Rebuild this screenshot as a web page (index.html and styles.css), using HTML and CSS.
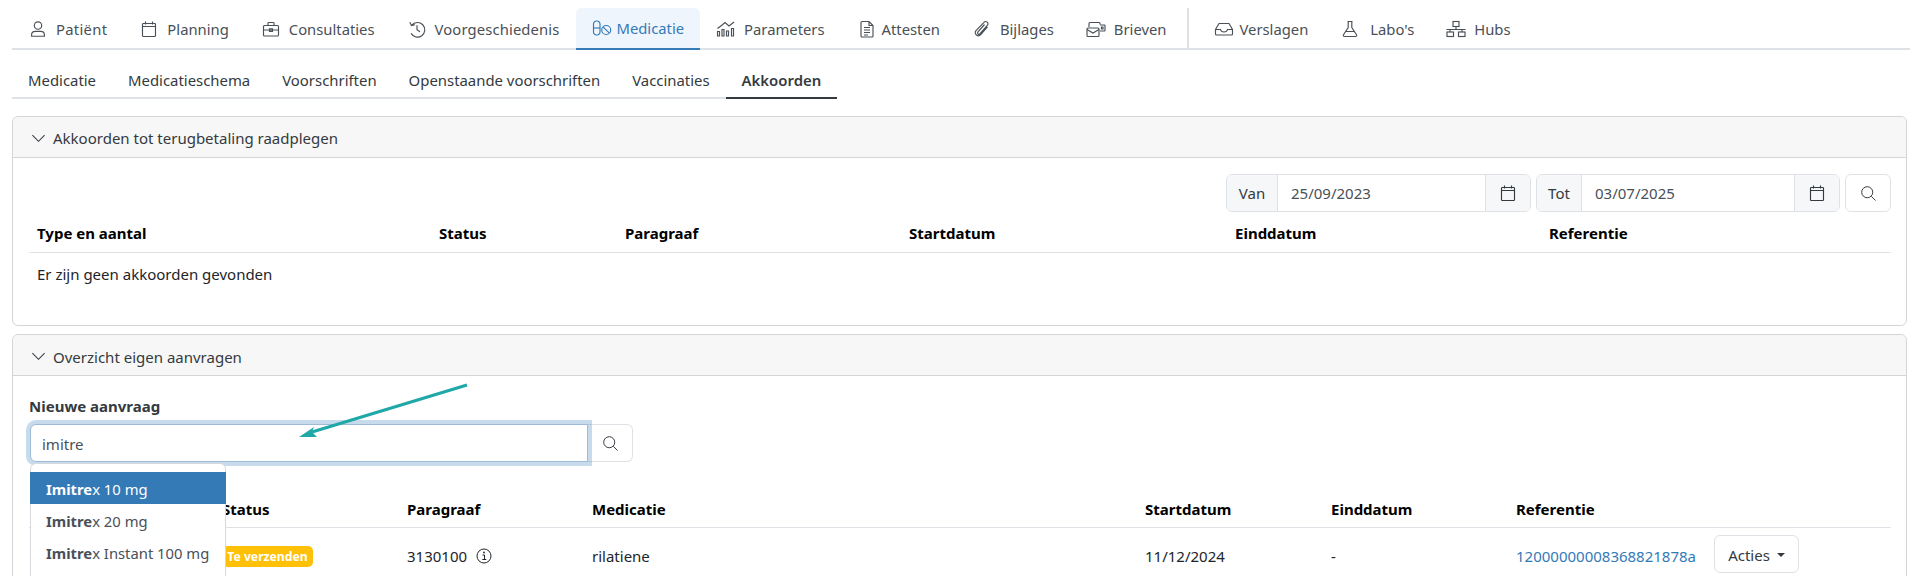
FILE: index.html
```html
<!DOCTYPE html>
<html lang="nl">
<head>
<meta charset="utf-8">
<title>Akkoorden</title>
<link rel="stylesheet" href="styles.css">
</head>
<body>
<nav class="main-nav">
  <a class="tab tab-patient"><svg class="ic" viewBox="0 0 20 20"><circle cx="10" cy="6.500" r="3.700"/><path d="M3.600 17.200v-1.400c0-2.200 1.800-3.400 3.800-3.400h5.200c2 0 3.800 1.200 3.800 3.400v1.400z"/></svg>Patiënt</a>
  <a class="tab"><svg class="ic" viewBox="0 0 20 20"><rect x="3.500" y="4.500" width="13" height="13" rx=".8"/><path d="M3.500 7.500h13M6.500 2.500v3M13.500 2.500v3"/></svg>Planning</a>
  <a class="tab"><svg class="ic" viewBox="0 0 20 20"><rect x="2.500" y="6.500" width="15" height="10.500" rx="1"/><path d="M7 6.500V4.300c0-.5.3-.8.8-.8h4.400c.5 0 .8.300.8.800v2.200M2.500 11h15M8.500 9.700h3v2.600h-3z"/></svg>Consultaties</a>
  <a class="tab tab-history"><svg class="ic" viewBox="0 0 20 20"><path d="M4.800 6.200A7.300 7.300 0 1 1 4.100 14.400M2.800 3.200l1.700 3.300 3.400-.8M10 6.300v4.400l3 2"/></svg>Voorgeschiedenis</a>
  <a class="tab tab-active tab-tight"><svg class="ic" viewBox="0 0 20 20"><rect x="1.500" y="3" width="6.500" height="14" rx="3.250"/><path d="M1.500 10H8"/><circle cx="14.200" cy="12" r="4.500"/><path d="M11 8.800l6.400 6.400"/></svg>Medicatie</a>
  <a class="tab"><svg class="ic" viewBox="0 0 20 20"><path d="M1.500 9.500l4-3 3.500-3 4 3.500 5-4"/><path d="M1.500 12.500h2v4.500h-2zM6 10.500h2V17H6zM10.500 12h2v5h-2zM15.500 9.500h2V17h-2z"/></svg>Parameters</a>
  <a class="tab tab-tight"><svg class="ic" viewBox="0 0 20 20"><path d="M4 3.500c0-.6.4-1 1-1h7l4 4v10.500c0 .6-.4 1-1 1H5c-.6 0-1-.4-1-1zM12 2.500v4h4M7 8.500h6M7 11h6M7 13.500h6M7 16h4"/></svg>Attesten</a>
  <a class="tab"><svg class="ic" viewBox="0 0 20 20"><path d="M12.500 5.500l-6.700 7.700c-1 1.200 1 2.900 2 1.800l7.700-8.800c1.800-2.100-1.600-5-3.500-2.900L4 11.700c-2.600 3 2.100 7 4.700 4l6.800-7.800"/></svg>Bijlages</a>
  <a class="tab"><svg class="ic" viewBox="0 0 20 20"><path d="M3 8V4.500c0-.6.4-1 1-1h9c.6 0 1 .4 1 1v1"/><rect x="1" y="9" width="12" height="8.500" rx="1"/><path d="M1 10.500l6 3.500 6-3.500M14 6h4.500c.3 0 .5.200.5.500v5c0 .3-.2.500-.5.500H14"/><path d="M15.500 8h1.500v2h-1.500z"/></svg>Brieven</a>
  <span class="nav-sep"></span>
  <a class="tab tab-tight"><svg class="ic" viewBox="0 0 20 20"><path d="M1.500 10.500l3.500-6h10l3.500 6v4.500c0 .6-.4 1-1 1h-15c-.6 0-1-.4-1-1z"/><path d="M1.500 10.500h5c.3 1.500 1.700 2.500 3.500 2.500s3.200-1 3.500-2.500h5"/></svg>Verslagen</a>
  <a class="tab tab-wide"><svg class="ic" viewBox="0 0 20 20"><path d="M7.500 2.500h5M8.200 2.500v6L3.500 15.800c-.6 1 .1 1.700 1 1.700h11c.9 0 1.600-.7 1-1.700L11.800 8.500v-6M5.800 12.500h8.400"/></svg>Labo's</a>
  <a class="tab"><svg class="ic" viewBox="0 0 20 20"><rect x="7" y="2.500" width="6" height="5"/><rect x="1" y="13" width="6.500" height="4.500"/><rect x="12.500" y="13" width="6.500" height="4.500"/><path d="M10 7.500v3M.5 10.500h19M4 10.500V13M16 10.500V13"/></svg>Hubs</a>
</nav>

<nav class="sub-nav">
  <a class="sub-tab">Medicatie</a>
  <a class="sub-tab">Medicatieschema</a>
  <a class="sub-tab">Voorschriften</a>
  <a class="sub-tab">Openstaande voorschriften</a>
  <a class="sub-tab">Vaccinaties</a>
  <a class="sub-tab sub-active">Akkoorden</a>
</nav>

<section class="card">
  <header class="card-head"><svg class="chev" viewBox="0 0 16 16"><path d="M1.500 4.500L8 11l6.500-6.500"/></svg>Akkoorden tot terugbetaling raadplegen</header>
  <div class="card-body">
    <div class="filters">
      <div class="group group-van">
        <span class="addon addon-van">Van</span>
        <span class="field">25/09/2023</span>
        <span class="addon addon-cal"><svg class="ic cal" viewBox="0 0 20 20"><rect x="3.500" y="4.500" width="13" height="13" rx=".8"/><path d="M3.500 7.500h13M6.500 2.500v3M13.500 2.500v3"/></svg></span>
      </div>
      <div class="group group-tot">
        <span class="addon addon-tot">Tot</span>
        <span class="field">03/07/2025</span>
        <span class="addon addon-cal"><svg class="ic cal" viewBox="0 0 20 20"><rect x="3.500" y="4.500" width="13" height="13" rx=".8"/><path d="M3.500 7.500h13M6.500 2.500v3M13.500 2.500v3"/></svg></span>
      </div>
      <button class="btn-search"><svg class="ic mag" viewBox="0 0 20 20"><circle cx="8.500" cy="8.500" r="6.500"/><path d="M13.300 13.300l5 5"/></svg></button>
    </div>
    <div class="grid grid-one grid-head">
      <span>Type en aantal</span><span>Status</span><span>Paragraaf</span><span>Startdatum</span><span>Einddatum</span><span>Referentie</span>
    </div>
    <div class="empty">Er zijn geen akkoorden gevonden</div>
  </div>
</section>

<section class="card card-two">
  <header class="card-head card-head-two"><svg class="chev" viewBox="0 0 16 16"><path d="M1.500 4.500L8 11l6.500-6.500"/></svg>Overzicht eigen aanvragen</header>
  <div class="card-body body-two">
    <label class="new-label">Nieuwe aanvraag</label>
    <div class="search">
      <div class="search-input">imitre</div>
      <button class="btn-search btn-join"><svg class="ic mag" viewBox="0 0 20 20"><circle cx="8.500" cy="8.500" r="6.500"/><path d="M13.300 13.300l5 5"/></svg></button>
      <ul class="dropdown">
        <li class="opt opt-active"><b>Imitre</b>x 10 mg</li>
        <li class="opt"><b>Imitre</b>x 20 mg</li>
        <li class="opt"><b>Imitre</b>x Instant 100 mg</li>
      </ul>
    </div>
    <div class="grid grid-two grid-head grid-head-two">
      <span></span><span>Status</span><span>Paragraaf</span><span>Medicatie</span><span>Startdatum</span><span>Einddatum</span><span>Referentie</span>
    </div>
    <div class="grid grid-two grid-row">
      <span></span>
      <span><span class="badge">Te verzenden</span></span>
      <span class="para">3130100 <svg class="info" viewBox="0 0 16 16"><circle cx="8" cy="8" r="7"/><path d="M6.500 7h2v4.500M6.300 11.500h4"/><circle class="dot" cx="8" cy="4.500" r=".9"/></svg></span>
      <span>rilatiene</span>
      <span>11/12/2024</span>
      <span>-</span>
      <span class="ref"><a class="link">12000000008368821878a</a><button class="btn-acties">Acties<i class="caret"></i></button></span>
    </div>
  </div>
</section>

<svg class="arrow" viewBox="0 0 180 60"><path d="M168 3L13 50"/><path class="head" d="M0 55l15-10-2 5 5 5z"/></svg>
</body>
</html>
```
FILE: styles.css
```css
* { box-sizing: border-box; }
html, body { height: 576px; overflow: hidden; }
body {
  margin: 0;
  padding: 0 4px 0 12px;
  position: relative;
  background: #fff;
  color: #212529;
  font: 15px/20px "Noto Sans", "Open Sans", sans-serif;
}
svg { display: block; flex: none; }
.ic { width: 20px; height: 20px; fill: none; stroke: #495057; stroke-width: 1.15; }

.main-nav {
  display: flex;
  height: 50px;
  margin-right: -3px;
  padding-top: 8px;
  border-bottom: 2px solid #dee2e6;
  font-size: 14.8px;
}
.tab {
  display: flex;
  align-items: center;
  gap: 8px;
  height: 42px;
  padding: 0 16px;
  color: #495057;
}
.tab-patient { letter-spacing: .3px; }
.tab-history { letter-spacing: .13px; }
.tab-tight { gap: 5px; }
.tab-wide { gap: 10px; }
.tab-active {
  background: #eff5fc;
  color: #337ab7;
  border-bottom: 2px solid #337ab7;
  border-radius: 6px 6px 0 0;
}
.tab-active .ic { stroke: #337ab7; }
.nav-sep { width: 2px; height: 40px; margin: 0 9px 0 5px; background: #dee2e6; }

.sub-nav { display: inline-flex; height: 49px; vertical-align: top; font-size: 14.9px; }
.sub-tab {
  display: flex;
  align-items: center;
  height: 49px;
  padding: 12px 16px 0;
  border-bottom: 2px solid #dee2e6;
  color: #343a40;
}
.sub-active { font-weight: 600; border-bottom-color: #343a40; }

.card {
  height: 210px;
  margin-top: 17px;
  border: 1px solid #d5d5d5;
  border-radius: 6px;
  overflow: hidden;
}
.card-two { height: 300px; margin-top: 8px; overflow: visible; }
.card-head {
  display: flex;
  align-items: center;
  gap: 7px;
  height: 41px;
  padding: 2px 18px 0;
  background: #f7f7f7;
  border-bottom: 1px solid #d5d5d5;
  border-radius: 6px 6px 0 0;
  color: #343a40;
}
.card-head-two { padding-top: 3px; }
.chev { width: 15px; height: 15px; fill: none; stroke: #343a40; stroke-width: 1.1; }
.card-body { padding: 16px 15px 16px 16px; }

.filters { display: flex; justify-content: flex-end; gap: 5px; }
.group { display: flex; height: 38px; border: 1px solid #dee2e6; border-radius: 6px; overflow: hidden; }
.group-van { width: 305px; }
.group-tot { width: 304px; }
.addon {
  display: flex;
  flex: none;
  align-items: center;
  justify-content: center;
  background: #f6f7f9;
  color: #343a40;
}
.addon-van { width: 51px; border-right: 1px solid #dee2e6; }
.addon-tot { width: 45px; border-right: 1px solid #dee2e6; }
.addon-cal { width: 45px; border-left: 1px solid #dee2e6; }
.field { flex: 1; display: flex; align-items: center; padding-left: 13px; color: #495057; }
.cal { stroke: #343a40; }
.btn-search {
  display: flex;
  align-items: center;
  justify-content: center;
  width: 46px;
  height: 38px;
  padding: 0;
  background: #fff;
  border: 1px solid #dee2e6;
  border-radius: 6px;
}
.mag { width: 17px; height: 17px; stroke: #343a40; }

.grid { display: grid; align-items: center; }
.grid > span { padding-left: 8px; }
.grid-one { grid-template-columns: 402px 186px 284px 326px 314px 1fr; }
.grid-two { grid-template-columns: 185px 185px 185px 553px 186px 185px 1fr; }
.grid-head { height: 41px; padding-top: 2px; border-bottom: 1px solid #dee2e6; font-weight: 700; color: #000; }
.empty { display: flex; align-items: center; height: 44px; padding: 0 0 2px 8px; }

.body-two { position: relative; }
.new-label { display: block; height: 28px; margin-bottom: 4px; line-height: 28px; font-weight: 700; color: #343a40; }
.search { position: relative; display: flex; width: 604px; margin-left: 1px; }
.search-input {
  position: relative;
  z-index: 1;
  display: flex;
  align-items: center;
  width: 558px;
  height: 38px;
  padding: 2px 0 0 11px;
  background: #fff;
  border: 1px solid #9dbbd8;
  border-radius: 6px 0 0 6px;
  box-shadow: 0 0 0 4px rgba(51, 122, 183, .27);
  color: #495057;
}
.btn-join { width: 45px; border-left: 0; border-radius: 0 6px 6px 0; }
.dropdown {
  position: absolute;
  z-index: 2;
  left: 0;
  top: 39px;
  width: 196px;
  margin: 0;
  padding: 8px 0 24px;
  list-style: none;
  background: #fff;
  border: 1px solid #d5d8dc;
  border-radius: 6px;
  font-size: 14.8px;
}
.opt { height: 32px; padding-left: 15px; line-height: 34px; color: #495057; }
.opt b { font-weight: 700; }
.opt-active { margin: 0 -1px; padding-left: 16px; background: #337ab7; color: #fff; }
.grid-head-two { height: 40px; margin-top: 26px; }
.grid-row { height: 52px; }
.grid-row > span { padding-top: 4px; }
.badge {
  display: block;
  width: 91px;
  height: 21px;
  line-height: 21px;
  text-align: center;
  font-size: 12.2px;
  font-weight: 700;
  color: #fff;
  background: #ffc107;
  border-radius: 5px;
}
.para { display: flex; align-items: center; gap: 9px; }
.info { width: 16px; height: 16px; fill: none; stroke: #212529; stroke-width: 1; }
.info .dot { fill: #212529; stroke: none; }
.grid-row > .ref { display: flex; align-items: center; gap: 18px; padding-top: 0; }
.link { padding-top: 4px; color: #337ab7; }
.btn-acties {
  display: flex;
  align-items: center;
  justify-content: center;
  gap: 7px;
  width: 85px;
  height: 38px;
  padding: 2px 0 0;
  background: #fff;
  border: 1px solid #dee2e6;
  border-radius: 6px;
  font: inherit;
  color: #343a40;
}
.caret { width: 0; height: 0; border: 4px solid transparent; border-top-color: #343a40; border-bottom: 0; }

.arrow {
  position: absolute;
  z-index: 3;
  left: 299px;
  top: 382px;
  width: 180px;
  height: 60px;
  fill: none;
  stroke: #20a8a8;
  stroke-width: 3.2;
}
.arrow .head { fill: #20a8a8; stroke: none; }
```
